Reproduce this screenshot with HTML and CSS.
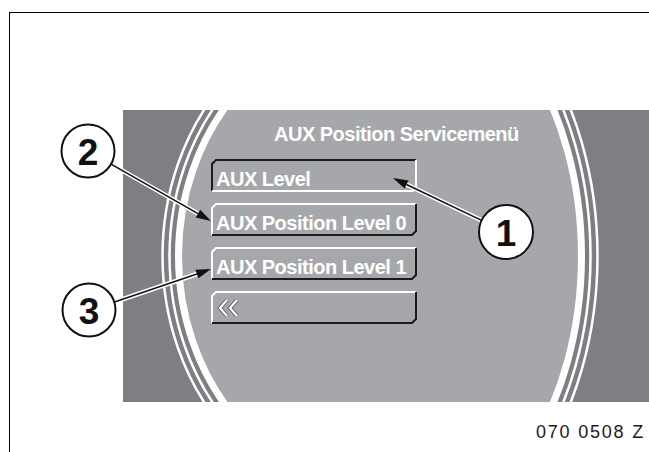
FILE: index.html
```html
<!DOCTYPE html>
<html lang="de">
<head>
    <meta charset="UTF-8">
    <meta name="viewport" content="width=device-width, initial-scale=1.0">
    <title>AUX Position Servicemenü</title>
    <link rel="stylesheet" href="styles.css">
</head>
<body>

<div class="page">
    <div class="frame">
        <!-- Bildschirm mit Menü -->
        <div class="screen">
            <svg class="dial" width="526" height="292" viewBox="0 0 526 292">
                <defs>
                    <clipPath id="half-l"><rect x="0" y="0" width="257" height="292"/></clipPath>
                    <clipPath id="half-r"><rect x="257" y="0" width="269" height="292"/></clipPath>
                </defs>
                <!-- linke Hälfte stärker gekrümmt -->
                <g clip-path="url(#half-l)">
                    <ellipse cx="259" cy="146" rx="219.5" ry="249.5" fill="none" stroke="#fff" stroke-width="2.5"/>
                    <ellipse cx="259" cy="146" rx="212.5" ry="242.5" fill="none" stroke="#fff" stroke-width="2.5"/>
                    <ellipse cx="259" cy="146" rx="203.5" ry="233.5" fill="#a6a7aa" stroke="#fff" stroke-width="7"/>
                </g>
                <g clip-path="url(#half-r)">
                    <ellipse cx="255" cy="146" rx="219.5" ry="305.5" fill="none" stroke="#fff" stroke-width="2.5"/>
                    <ellipse cx="255" cy="146" rx="212.5" ry="298.5" fill="none" stroke="#fff" stroke-width="2.5"/>
                    <ellipse cx="255" cy="146" rx="203.5" ry="289.5" fill="#a6a7aa" stroke="#fff" stroke-width="7"/>
                </g>
            </svg>

            <div class="menu">
                <div class="menu-title">AUX Position Servicemenü</div>

                <div class="menu-item selected">
                    <svg class="bevel" width="206" height="33" viewBox="0 0 206 33">
                        <path d="M1 32V5L5 1H205" stroke="#1b1b1b"/>
                        <path d="M205 1V29L202 32H1" stroke="#fff"/>
                    </svg>
                    <span>AUX Level</span>
                </div>

                <div class="menu-item">
                    <svg class="bevel" width="206" height="33" viewBox="0 0 206 33">
                        <path d="M1 32V5L5 1H205" stroke="#fff"/>
                        <path d="M205 1V28L201 32H1" stroke="#1b1b1b"/>
                    </svg>
                    <span>AUX Position Level 0</span>
                </div>

                <div class="menu-item">
                    <svg class="bevel" width="206" height="33" viewBox="0 0 206 33">
                        <path d="M1 32V5L5 1H205" stroke="#fff"/>
                        <path d="M205 1V28L201 32H1" stroke="#1b1b1b"/>
                    </svg>
                    <span>AUX Position Level 1</span>
                </div>

                <div class="menu-item">
                    <svg class="bevel" width="206" height="33" viewBox="0 0 206 33">
                        <path d="M1 32V5L5 1H205" stroke="#fff"/>
                        <path d="M205 1V28L201 32H1" stroke="#1b1b1b"/>
                    </svg>
                    <svg class="back" width="24" height="20" viewBox="0 0 24 20">
                        <path d="M10 2L3 10L10 18M20 2L13 10L20 18" stroke="#5c5d60" stroke-width="4"/>
                        <path d="M10 2L3 10L10 18M20 2L13 10L20 18" stroke="#fff" stroke-width="2.2"/>
                    </svg>
                </div>
            </div>
        </div>

        <div class="code">070 0508 Z</div>
    </div>

    <!-- Beschriftung 1, 2, 3 mit Pfeilen -->
    <svg class="callouts" width="649" height="452" viewBox="0 0 649 452">
        <g stroke="#fff" stroke-width="4.5" stroke-linecap="round">
            <line x1="481.6" y1="220.4" x2="406.5" y2="184.5"/>
            <line x1="111.5" y1="164.4" x2="198" y2="213.6"/>
            <line x1="114.5" y1="302" x2="196.9" y2="274"/>
        </g>
        <g stroke="#111" stroke-width="1.6">
            <line x1="481.6" y1="220.4" x2="406.5" y2="184.5"/>
            <line x1="111.5" y1="164.4" x2="198" y2="213.6"/>
            <line x1="114.5" y1="302" x2="196.9" y2="274"/>
        </g>
        <g fill="#111">
            <polygon points="393,178 408.5,180.4 404.6,188.6"/>
            <polygon points="211,221 195.7,217.5 200.2,209.7"/>
            <polygon points="211,269 198.4,278.2 195.4,269.7"/>
        </g>

        <g class="badge">
            <circle cx="506" cy="232" r="27"/>
            <text x="506" y="246">1</text>
        </g>
        <g class="badge">
            <circle cx="88" cy="151" r="26.5"/>
            <text x="88" y="164.5">2</text>
        </g>
        <g class="badge">
            <circle cx="89" cy="310" r="26.5"/>
            <text x="89" y="323.5">3</text>
        </g>
    </svg>
</div>

</body>
</html>
```

FILE: styles.css
```css
body {
    margin: 0;
    padding: 0;
    font-family: 'Liberation Sans', Arial, sans-serif;
    background-color: #ffffff;
}

.page {
    position: relative;
    width: 649px;
    height: 452px;
    overflow: hidden;
}

.frame {
    margin: 12px 0 0 9px;
    height: 440px;
    box-sizing: border-box;
    border-top: 1px solid #000;
    border-left: 1px solid #000;
    display: flex;
    flex-direction: column;
}

.screen {
    position: relative;
    margin: 97px 0 0 113px;
    height: 292px;
    background-color: #7e7f83;
    overflow: hidden;
}

.dial {
    position: absolute;
    top: 0;
    left: 0;
}

.menu {
    position: relative;
    padding: 14px 0 0 88px;
    display: flex;
    flex-direction: column;
    align-items: flex-start;
    gap: 11px;
    color: #ffffff;
    font-size: 20px;
    line-height: 20px;
    font-weight: bold;
    letter-spacing: -0.5px;
}

.menu-title {
    margin: 0 0 4px 63px;
    white-space: nowrap;
}

.menu-item {
    position: relative;
    width: 206px;
    height: 33px;
    box-sizing: border-box;
    padding: 10px 0 0 5px;
    white-space: nowrap;
}

.menu-item span {
    position: relative;
}

.bevel {
    position: absolute;
    top: 0;
    left: 0;
    fill: none;
    stroke-width: 2;
}

.back {
    display: block;
    position: relative;
    margin: -3px 0 0 1px;
    fill: none;
}

.code {
    margin: 20px 4px 0 0;
    text-align: right;
    font-size: 18px;
    line-height: 20px;
    letter-spacing: 1.8px;
    color: #1a1a1a;
}

.callouts {
    position: absolute;
    top: 0;
    left: 0;
    pointer-events: none;
}

.badge circle {
    fill: #ffffff;
    stroke: #111;
    stroke-width: 2;
}

.badge text {
    font-family: 'Liberation Sans', Arial, sans-serif;
    font-size: 37px;
    font-weight: bold;
    text-anchor: middle;
    fill: #111;
}
```
